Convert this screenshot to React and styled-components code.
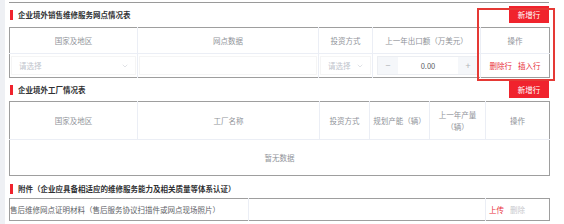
import React from "react";
import styled, { createGlobalStyle } from "styled-components";
import { ChevronDown } from "lucide-react";

const GlobalStyle = createGlobalStyle`
  html, body {
    margin: 0;
    padding: 0;
    background: #ffffff;
  }
  body {
    font-family: "Noto Sans CJK SC", "Noto Sans", sans-serif;
    font-size: 7.5px;
    color: #606266;
  }
`;

const Page = styled.div`
  display: flex;
  width: 564px;
  height: 224px;
  overflow: hidden;
  position: relative;
`;

const SideStrip = styled.div`
  width: 5px;
  background: #eef0f4;
  flex-shrink: 0;
`;

const Main = styled.div`
  width: 540px;
  padding-left: 4px;
  display: flex;
  flex-direction: column;
`;

const PrevBottom = styled.div`
  height: 6px;
  border-bottom: 1px solid #9a9a9a;
  margin-bottom: 3px;
`;

const Section = styled.div`
  display: flex;
  flex-direction: column;
  margin-bottom: ${(p) => p.$gap || 3}px;
`;

const SectionHead = styled.div`
  height: 17px;
  display: flex;
  align-items: center;
  justify-content: space-between;
  margin-bottom: ${(p) => p.$gap || 4}px;
`;

const Title = styled.div`
  display: flex;
  align-items: center;
  gap: 5px;
  padding-left: 1px;
  font-weight: 700;
  color: #303133;
  font-size: 7.5px;

  &::before {
    content: "";
    width: 3px;
    height: 10px;
    background: #f0232d;
  }
`;

const AddButton = styled.button`
  width: 40px;
  height: 17px;
  border: none;
  background: #f0232d;
  color: #fff;
  font-family: inherit;
  font-size: 7.5px;
  padding: 0;
  cursor: pointer;
`;

const Table = styled.table`
  width: 540px;
  table-layout: fixed;
  border-collapse: collapse;
  border: 1px solid #9e9e9e;
`;

const Th = styled.th`
  height: ${(p) => p.$h || 24}px;
  font-weight: 400;
  color: #909399;
  text-align: center;
  line-height: 12px;
  padding: 0 2px;
  border-right: 1px solid #ebeef5;
  border-bottom: 1px solid #ebeef5;
  &:last-child {
    border-right: none;
  }
`;

const Td = styled.td`
  height: ${(p) => p.$h || 23}px;
  padding: 0 ${(p) => (p.$pad === undefined ? 2 : p.$pad)}px;
  text-align: ${(p) => p.$align || "center"};
  border-right: 1px solid #ebeef5;
  &:last-child {
    border-right: none;
  }
`;

const SelectBox = styled.div`
  height: 17px;
  display: flex;
  align-items: center;
  justify-content: space-between;
  padding: 0 6px 0 7px;
  border: 1px solid #f5f5f5;
  color: #c0c4cc;
  background: #fff;
`;

const TextInput = styled.div`
  height: 17px;
  border: 1px solid #f5f5f5;
`;

const NumberInput = styled.div`
  display: flex;
  height: 17px;
  border: 1px solid #eceef2;
  margin: 0 1px 0 4px;
`;

const StepBtn = styled.div`
  width: 20px;
  display: flex;
  align-items: center;
  justify-content: center;
  background: #f5f7fa;
  color: #b0b3b8;
  font-size: 9px;
`;

const NumValue = styled.div`
  flex: 1;
  display: flex;
  align-items: center;
  justify-content: center;
  color: #606266;
`;

const LinkBtn = styled.span`
  color: ${(p) => (p.$muted ? "#c8c9cc" : "#e8303a")};
  margin: 0 3px;
  cursor: pointer;
`;

const Empty = styled.td`
  height: 33px;
  text-align: center;
  color: #909399;
`;

const Highlight = styled.div`
  position: absolute;
  left: 477px;
  top: 8px;
  width: 74px;
  height: 69px;
  border: 2px solid #e53935;
  pointer-events: none;
`;

function Select() {
  return (
    <SelectBox>
      <span>请选择</span>
      <ChevronDown size={8} color="#c0c4cc" strokeWidth={1.5} />
    </SelectBox>
  );
}

export default function App() {
  return (
    <>
      <GlobalStyle />
      <Page>
        <SideStrip />
        <Main>
          <PrevBottom />

          <Section>
            <SectionHead>
              <Title>企业境外销售维修服务网点情况表</Title>
              <AddButton>新增行</AddButton>
            </SectionHead>
            <Table>
              <colgroup>
                <col style={{ width: 128 }} />
                <col style={{ width: 181 }} />
                <col style={{ width: 54 }} />
                <col style={{ width: 108 }} />
                <col style={{ width: 69 }} />
              </colgroup>
              <thead>
                <tr>
                  <Th $h={25}>国家及地区</Th>
                  <Th $h={25}>网点数据</Th>
                  <Th $h={25}>投资方式</Th>
                  <Th $h={25}>上一年出口额（万美元）</Th>
                  <Th $h={25}>操作</Th>
                </tr>
              </thead>
              <tbody>
                <tr>
                  <Td $pad={1}>
                    <Select />
                  </Td>
                  <Td $pad={1}>
                    <TextInput />
                  </Td>
                  <Td $pad={1}>
                    <Select />
                  </Td>
                  <Td $pad={0}>
                    <NumberInput>
                      <StepBtn>−</StepBtn>
                      <NumValue>0.00</NumValue>
                      <StepBtn>+</StepBtn>
                    </NumberInput>
                  </Td>
                  <Td>
                    <LinkBtn>删除行</LinkBtn>
                    <LinkBtn>插入行</LinkBtn>
                  </Td>
                </tr>
              </tbody>
            </Table>
          </Section>

          <Section $gap={4}>
            <SectionHead $gap={3}>
              <Title>企业境外工厂情况表</Title>
              <AddButton>新增行</AddButton>
            </SectionHead>
            <Table>
              <colgroup>
                <col style={{ width: 128 }} />
                <col style={{ width: 182 }} />
                <col style={{ width: 50 }} />
                <col style={{ width: 60 }} />
                <col style={{ width: 56 }} />
                <col style={{ width: 64 }} />
              </colgroup>
              <thead>
                <tr>
                  <Th $h={37}>国家及地区</Th>
                  <Th $h={37}>工厂名称</Th>
                  <Th $h={37}>投资方式</Th>
                  <Th $h={37}>规划产能（辆）</Th>
                  <Th $h={37}>
                    上一年产量
                    <br />
                    （辆）
                  </Th>
                  <Th $h={37}>操作</Th>
                </tr>
              </thead>
              <tbody>
                <tr>
                  <Empty colSpan={6}>暂无数据</Empty>
                </tr>
              </tbody>
            </Table>
          </Section>

          <Section>
            <SectionHead $gap={1}>
              <Title>附件（企业应具备相适应的维修服务能力及相关质量等体系认证）</Title>
            </SectionHead>
            <Table>
              <colgroup>
                <col style={{ width: 239 }} />
                <col style={{ width: 237 }} />
                <col style={{ width: 64 }} />
              </colgroup>
              <tbody>
                <tr>
                  <Td $h={21} $pad={0} $align="left">
                    售后维修网点证明材料（售后服务协议扫描件或网点现场照片）
                  </Td>
                  <Td $h={21} />
                  <Td $h={21} $align="left" $pad={0}>
                    <LinkBtn>上传</LinkBtn>
                    <LinkBtn $muted>删除</LinkBtn>
                  </Td>
                </tr>
              </tbody>
            </Table>
          </Section>
        </Main>
        <Highlight />
      </Page>
    </>
  );
}
